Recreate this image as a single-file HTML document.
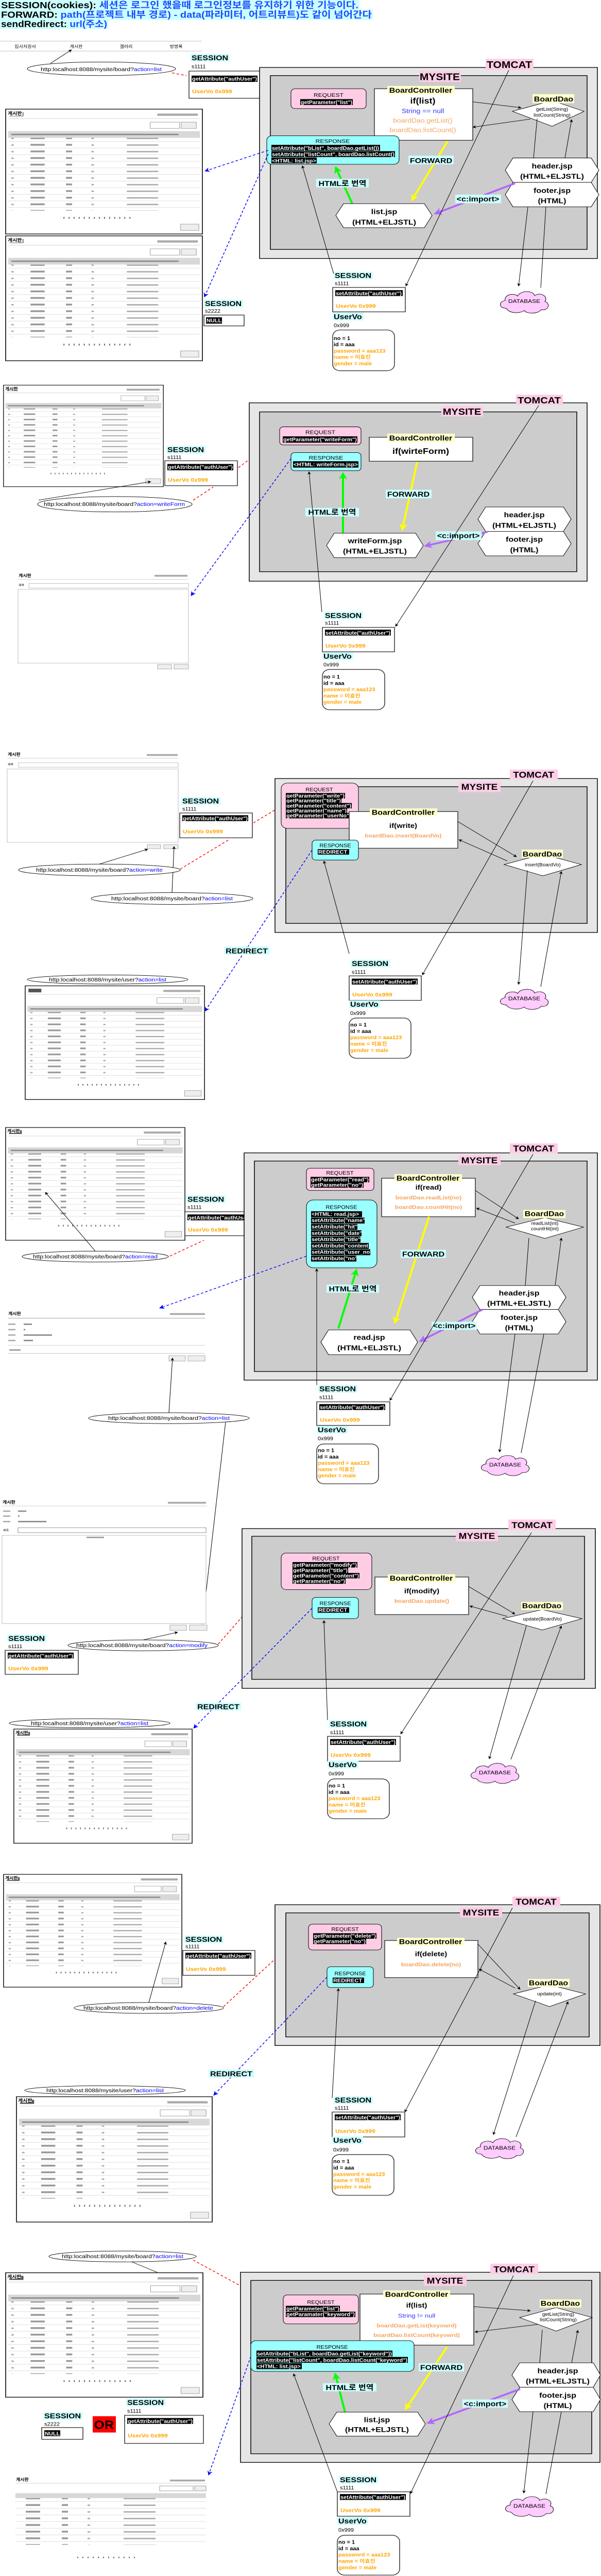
<!DOCTYPE html>
<html><head><meta charset="utf-8">
<meta name="viewport" content="width=1167">
<style>
html,body{margin:0;padding:0;background:#fff;width:100%;height:100%;overflow:hidden;}
svg{display:block;width:100vw;height:100vh;position:fixed;left:0;top:0}
text{font-family:"Liberation Sans","Noto Sans CJK KR",sans-serif;}
.lb{font-size:16px;font-weight:bold;fill:#000}
.sm{font-size:11px;fill:#000}
.wt{font-size:11px;fill:#fff;font-weight:bold}
.or{font-size:12px;fill:#ffa500;font-weight:bold}
.bx{fill:#fff;stroke:#333;stroke-width:1.5}
.tc{fill:#e6e6e6;stroke:#000;stroke-width:1.5}
.ms{fill:#cccccc;stroke:#000;stroke-width:1.5}
.rq{fill:#ffcce6;stroke:#000;stroke-width:1}
.rs{fill:#99ffff;stroke:#000;stroke-width:1}
.hx{fill:#fff;stroke:#000;stroke-width:1}
.hxt{font-size:16px;font-weight:bold;text-anchor:middle}
.ct{text-anchor:middle}
.thin{stroke:#000;stroke-width:1;fill:none}
.rd{stroke:#f00;stroke-width:1.5;stroke-dasharray:5 4;fill:none}
.bl{stroke:#00f;stroke-width:1.5;stroke-dasharray:5 4;fill:none}
.url{font-size:12px}
.uv{font-size:11px;font-weight:bold}
</style></head><body>
<svg viewBox="0 0 1167 5691" preserveAspectRatio="none" xmlns="http://www.w3.org/2000/svg">
<defs>
<marker id="ab" viewBox="0 0 10 10" refX="9" refY="5" markerWidth="7" markerHeight="7" orient="auto" markerUnits="userSpaceOnUse"><path d="M0,0L10,5L0,10L3,5z" fill="#000"/></marker>
<marker id="ar" viewBox="0 0 10 10" refX="9" refY="5" markerWidth="9" markerHeight="9" orient="auto" markerUnits="userSpaceOnUse"><path d="M0,0L10,5L0,10L3,5z" fill="#f00"/></marker>
<marker id="abl" viewBox="0 0 10 10" refX="9" refY="5" markerWidth="10" markerHeight="10" orient="auto" markerUnits="userSpaceOnUse"><path d="M0,0L10,5L0,10L3,5z" fill="#00f"/></marker>
<marker id="ay" viewBox="0 0 10 10" refX="8" refY="5" markerWidth="16" markerHeight="16" orient="auto" markerUnits="userSpaceOnUse"><path d="M0,0L10,5L0,10L3,5z" fill="#ff0"/></marker>
<marker id="ag" viewBox="0 0 10 10" refX="8" refY="5" markerWidth="16" markerHeight="16" orient="auto" markerUnits="userSpaceOnUse"><path d="M0,0L10,5L0,10L3,5z" fill="#0f0"/></marker>
<marker id="ap" viewBox="0 0 10 10" refX="8" refY="5" markerWidth="16" markerHeight="16" orient="auto" markerUnits="userSpaceOnUse"><path d="M0,0L10,5L0,10L3,5z" fill="#b266ff"/></marker>
<pattern id="rowp" patternUnits="userSpaceOnUse" width="390" height="14.7">
<rect width="390" height="14.7" fill="#fff"/>
<line x1="0" y1="14.2" x2="390" y2="14.2" stroke="#ccc" stroke-width="0.8"/>
<rect x="12" y="6" width="5" height="3" fill="#aaa"/><rect x="50" y="5" width="28" height="4" fill="#999"/>
<rect x="120" y="5" width="12" height="4" fill="#999"/><rect x="170" y="6" width="5" height="3" fill="#aaa"/>
<rect x="240" y="6" width="62" height="3" fill="#aaa"/>
</pattern>
<symbol id="brd" viewBox="0 0 390 280" preserveAspectRatio="none">
<rect x="1" y="1" width="388" height="278" fill="#fff" stroke="#333" stroke-width="2"/>
<rect x="8" y="8" width="28" height="9" fill="#555"/>
<rect x="300" y="11" width="80" height="5" fill="#aaa"/>
<line x1="6" y1="22" x2="384" y2="22" stroke="#ccc"/>
<rect x="286" y="30" width="58" height="14" fill="#fff" stroke="#999"/>
<rect x="347" y="30" width="30" height="14" fill="#eee" stroke="#999"/>
<rect x="6" y="50" width="378" height="15" fill="#d8d8d8"/>
<rect x="12" y="56" width="330" height="3" fill="#888"/>
<rect x="6" y="65" width="378" height="162" fill="url(#rowp)"/>
<line x1="115" y1="243" x2="250" y2="243" stroke="#666" stroke-width="4" stroke-dasharray="2 8"/>
<rect x="346" y="257" width="36" height="14" fill="#eee" stroke="#999"/>
</symbol>
<symbol id="cloud" viewBox="0 0 110 60" preserveAspectRatio="none">
<path d="M20,45 C5,45 5,30 18,28 C15,15 35,10 42,18 C48,5 72,5 75,17 C88,8 102,20 95,30 C108,35 100,52 88,48 C82,58 60,58 55,50 C45,58 25,56 20,45 Z" fill="#ffccff" stroke="#000" stroke-width="1"/>
</symbol>
</defs>

<!-- TITLE -->
<rect x="0" y="0" width="698" height="22" fill="#ccffff"/>
<rect x="0" y="22" width="724" height="22" fill="#ccffff"/>
<rect x="0" y="44" width="210" height="20" fill="#ccffff"/>
<text x="2" y="18" font-size="20" font-weight="bold" textLength="694" lengthAdjust="spacingAndGlyphs">SESSION(cookies): <tspan fill="#1a4dff">세션은 로그인 했을때 로그인정보를 유지하기 위한 기능이다.</tspan></text>
<text x="2" y="39" font-size="20" font-weight="bold" textLength="720" lengthAdjust="spacingAndGlyphs">FORWARD: <tspan fill="#1a4dff">path(프로젝트 내부 경로) - data(파라미터, 어트리뷰트)도 같이 넘어간다</tspan></text>
<text x="2" y="60" font-size="20" font-weight="bold" textLength="206" lengthAdjust="spacingAndGlyphs">sendRedirect: <tspan fill="#1a4dff">url(주소)</tspan></text>

<!-- SECTION 1 -->
<line x1="0" y1="91" x2="392" y2="91" stroke="#ddd" stroke-width="2"/>
<line x1="0" y1="113" x2="392" y2="113" stroke="#ddd" stroke-width="2"/>
<text x="49" y="106" font-size="9" class="ct">입사지원서</text>
<text x="148" y="106" font-size="9" class="ct">게시판</text>
<text x="245" y="106" font-size="9" class="ct">갤러리</text>
<text x="342" y="106" font-size="9" class="ct">방명록</text>
<line x1="98" y1="140" x2="139" y2="110" class="thin" marker-end="url(#ab)"/>
<ellipse cx="197" cy="152" rx="144" ry="15" fill="#fff" stroke="#000"/>
<text x="79" y="157" class="url" textLength="235" lengthAdjust="spacingAndGlyphs">http:localhost:8088/mysite/board?<tspan fill="#00f">action=list</tspan></text>
<line x1="334" y1="161" x2="362" y2="167" class="rd"/>
<rect x="370" y="119" width="76" height="17" fill="#ccffff"/><text x="372" y="133" class="lb">SESSION</text>
<text x="372" y="151" class="sm">s1111</text>
<rect x="367" y="157" width="152" height="60" class="bx"/>
<rect x="372" y="167" width="128" height="14" fill="#000"/><text x="373" y="178" class="wt" textLength="126" lengthAdjust="spacingAndGlyphs">getAttribute("authUser")</text>
<text x="373" y="206" class="or">UserVo 0x999</text>
<line x1="521" y1="207" x2="563" y2="221" class="rd" marker-end="url(#ar)"/>

<rect x="504" y="149" width="656" height="422" class="tc"/>
<rect x="525" y="167" width="615" height="384" class="ms"/>
<rect x="943" y="130" width="93" height="25" fill="#ffcce6"/><text x="989" y="150" class="ct" font-size="21" font-weight="bold">TOMCAT</text>
<rect x="814" y="157" width="81" height="24" fill="#ffcce6"/><text x="854" y="177" class="ct" font-size="21" font-weight="bold">MYSITE</text>
<rect x="565" y="196" width="146" height="44" rx="8" class="rq"/>
<text x="638" y="214" class="ct" font-size="12">REQUEST</text>
<rect x="583" y="219" width="102" height="13" fill="#000"/><text x="634" y="230" class="wt ct" textLength="100" lengthAdjust="spacingAndGlyphs">getParameter("list")</text>
<rect x="727" y="196" width="191" height="114" class="bx"/>
<rect x="752" y="190" width="131" height="19" fill="#ffffcc"/><text x="817" y="205" class="ct lb">BoardController</text>
<text x="821" y="229" class="ct" font-size="18" font-weight="bold">if(list)</text>
<text x="821" y="250" class="ct" font-size="14" fill="#3333ff">String == null</text>
<text x="821" y="271" class="ct" font-size="14" fill="#f4a460">boardDao.getList()</text>
<text x="821" y="292" class="ct" font-size="14" fill="#f4a460">boardDao.listCount()</text>
<polygon points="995,246 1072,222 1134,246 1072,279" class="hx"/>
<rect x="1034" y="208" width="81" height="20" fill="#ffffcc"/><text x="1075" y="224" class="ct lb">BoardDao</text>
<text x="1072" y="245" class="ct" font-size="10">getList(String)</text>
<text x="1072" y="258" class="ct" font-size="10">listCount(String)</text>
<line x1="918" y1="225" x2="1012" y2="238" class="thin" marker-end="url(#ab)"/>
<line x1="1030" y1="263" x2="918" y2="281" class="thin" marker-end="url(#ab)"/>
<rect x="518" y="300" width="257" height="63" rx="10" class="rs"/>
<text x="646" y="316" class="ct" font-size="12">RESPONSE</text>
<rect x="527" y="320" width="211" height="13" fill="#000"/><text x="528" y="331" class="wt" textLength="208" lengthAdjust="spacingAndGlyphs">setAttribute("bList", boardDao.getList())</text>
<rect x="527" y="334" width="240" height="13" fill="#000"/><text x="528" y="345" class="wt" textLength="238" lengthAdjust="spacingAndGlyphs">setAttribute("listCount", boardDao.listCount()</text>
<rect x="527" y="348" width="88" height="13" fill="#000"/><text x="528" y="359" class="wt" textLength="86" lengthAdjust="spacingAndGlyphs">&lt;HTML: list.jsp&gt;</text>
<line x1="869" y1="312" x2="800" y2="442" stroke="#ff0" stroke-width="4" marker-end="url(#ay)"/>
<rect x="793" y="344" width="88" height="19" fill="#ccffff"/><text x="837" y="360" class="ct lb">FORWARD</text>
<line x1="684" y1="450" x2="652" y2="370" stroke="#0f0" stroke-width="4" marker-end="url(#ag)"/>
<rect x="614" y="395" width="102" height="19" fill="#ccffff"/><text x="665" y="411" class="ct lb">HTML로 번역</text>
<polygon points="667,450 824,450 839,476 824,503 667,503 652,476" class="hx"/>
<text x="746" y="473" class="hxt" font-weight="normal">list.jsp</text><text x="746" y="496" class="hxt">(HTML+ELJSTL)</text>
<polygon points="996,349 1148,349 1163,376 1148,403 996,403 981,376" class="hx"/>
<polygon points="996,403 1148,403 1163,430 1148,457 996,457 981,430" class="hx"/>
<text x="1072" y="372" class="hxt">header.jsp</text><text x="1072" y="395" class="hxt">(HTML+ELJSTL)</text>
<text x="1072" y="426" class="hxt">footer.jsp</text><text x="1072" y="449" class="hxt">(HTML)</text>
<line x1="1000" y1="405" x2="845" y2="472" stroke="#b266ff" stroke-width="4" marker-end="url(#ap)"/>
<rect x="884" y="430" width="89" height="19" fill="#ccffff"/><text x="928" y="445" class="ct lb">&lt;c:import&gt;</text>
<line x1="988" y1="155" x2="788" y2="632" class="thin" marker-end="url(#ab)"/>
<line x1="648" y1="605" x2="587" y2="366" class="thin" marker-end="url(#ab)"/>
<line x1="1043" y1="262" x2="1036" y2="349" class="thin"/>
<line x1="1025" y1="457" x2="1007" y2="632" class="thin" marker-end="url(#ab)"/>
<line x1="1050" y1="636" x2="1060" y2="457" class="thin"/>
<line x1="1097" y1="349" x2="1110" y2="264" class="thin" marker-end="url(#ab)"/>
<use href="#brd" x="10" y="240" width="384" height="278"/>
<rect x="14" y="244" width="30" height="12" fill="#fff"/><text x="15" y="254" font-size="10" font-weight="bold">게시판</text>
<use href="#brd" x="10" y="520" width="384" height="278"/>
<rect x="14" y="524" width="30" height="12" fill="#fff"/><text x="15" y="534" font-size="10" font-weight="bold">게시판</text>
<line x1="521" y1="332" x2="398" y2="378" class="bl" marker-end="url(#abl)"/>
<line x1="521" y1="340" x2="397" y2="656" class="bl" marker-end="url(#abl)"/>
<rect x="396" y="662" width="76" height="17" fill="#ccffff"/><text x="398" y="676" class="lb">SESSION</text>
<text x="398" y="691" class="sm">s2222</text>
<rect x="396" y="696" width="78" height="24" class="bx"/>
<rect x="400" y="701" width="31" height="14" fill="#000"/><text x="401" y="712" class="wt">NULL</text>
<rect x="648" y="600" width="76" height="17" fill="#ccffff"/><text x="650" y="614" class="lb">SESSION</text>
<text x="650" y="630" class="sm">s1111</text>
<rect x="646" y="635" width="141" height="54" class="bx"/>
<rect x="651" y="641" width="131" height="13" fill="#000"/><text x="652" y="652" class="wt" textLength="128" lengthAdjust="spacingAndGlyphs">setAttribute("authUser")</text>
<text x="652" y="680" class="or">UserVo 0x999</text>
<rect x="646" y="690" width="60" height="18" fill="#ccffff"/><text x="648" y="705" class="lb">UserVo</text>
<text x="648" y="723" class="sm">0x999</text>
<rect x="646" y="729" width="120" height="90" rx="14" class="bx"/>
<text x="648" y="751" class="uv">no = 1</text><text x="648" y="765" class="uv">id = aaa</text>
<text x="648" y="779" class="uv" fill="#ffa500">password = aaa123</text><text x="648" y="793" class="uv" fill="#ffa500">name = 이효진</text><text x="648" y="807" class="uv" fill="#ffa500">gender = male</text>
<use href="#cloud" x="963" y="636" width="110" height="60"/><text x="1018" y="669" class="ct" font-size="12">DATABASE</text>

<!-- SECTION 2 -->
<use href="#brd" x="6" y="850" width="312" height="226"/>
<rect x="9" y="853" width="26" height="10" fill="#fff"/><text x="10" y="862" font-size="9" font-weight="bold">게시판</text>
<line x1="75" y1="1105" x2="293" y2="1064" class="thin" marker-end="url(#ab)"/>
<rect x="323" y="985" width="76" height="17" fill="#ccffff"/><text x="325" y="999" class="lb">SESSION</text>
<text x="325" y="1014" class="sm">s1111</text>
<rect x="320" y="1018" width="141" height="55" class="bx"/>
<rect x="325" y="1025" width="128" height="14" fill="#000"/><text x="326" y="1036" class="wt" textLength="126" lengthAdjust="spacingAndGlyphs">getAttribute("authUser")</text>
<text x="326" y="1064" class="or">UserVo 0x999</text>
<ellipse cx="223" cy="1114" rx="150" ry="17" fill="#fff" stroke="#000"/>
<text x="85" y="1118" class="url" textLength="274" lengthAdjust="spacingAndGlyphs">http:localhost:8088/mysite/board?<tspan fill="#00f">action=writeForm</tspan></text>
<line x1="375" y1="1105" x2="414" y2="1076" class="rd"/>
<line x1="463" y1="1033" x2="543" y2="965" class="rd" marker-end="url(#ar)"/>
<rect x="484" y="890" width="656" height="394" class="tc"/>
<rect x="504" y="910" width="616" height="353" class="ms"/>
<rect x="1002" y="872" width="91" height="23" fill="#ffcce6"/><text x="1047" y="891" class="ct" font-size="20" font-weight="bold">TOMCAT</text>
<rect x="857" y="897" width="81" height="23" fill="#ffcce6"/><text x="897" y="916" class="ct" font-size="20" font-weight="bold">MYSITE</text>
<rect x="543" y="943" width="158" height="40" rx="7" class="rq"/>
<text x="622" y="959" class="ct" font-size="12">REQUEST</text>
<rect x="549" y="964" width="145" height="14" fill="#000"/><text x="550" y="975" class="wt" textLength="143" lengthAdjust="spacingAndGlyphs">getParameter("writeForm")</text>
<rect x="565" y="1000" width="136" height="40" rx="7" class="rs"/>
<text x="633" y="1015" class="ct" font-size="12">RESPONSE</text>
<rect x="569" y="1019" width="127" height="14" fill="#000"/><text x="570" y="1030" class="wt" textLength="125" lengthAdjust="spacingAndGlyphs">&lt;HTML: writeForm.jsp&gt;</text>
<rect x="717" y="966" width="201" height="53" class="bx"/>
<rect x="752" y="958" width="131" height="19" fill="#ffffcc"/><text x="817" y="973" class="ct lb">BoardController</text>
<text x="817" y="1003" class="ct" font-size="18" font-weight="bold">if(wirteForm)</text>
<line x1="810" y1="1021" x2="781" y2="1170" stroke="#ff0" stroke-width="4" marker-end="url(#ay)"/>
<rect x="749" y="1082" width="89" height="19" fill="#ccffff"/><text x="793" y="1097" class="ct lb">FORWARD</text>
<line x1="666" y1="1177" x2="666" y2="1046" stroke="#0f0" stroke-width="4" marker-end="url(#ag)"/>
<rect x="593" y="1122" width="104" height="19" fill="#ccffff"/><text x="645" y="1137" class="ct lb">HTML로 번역</text>
<polygon points="649,1178 807,1178 822,1205 807,1232 649,1232 634,1205" class="hx"/>
<text x="728" y="1200" class="hxt" font-weight="normal">writeForm.jsp</text><text x="728" y="1223" class="hxt">(HTML+ELJSTL)</text>
<polygon points="943,1120 1094,1120 1109,1147 1094,1174 943,1174 928,1147" class="hx"/>
<polygon points="943,1174 1094,1174 1109,1201 1094,1228 943,1228 928,1201" class="hx"/>
<text x="1018" y="1143" class="hxt">header.jsp</text><text x="1018" y="1166" class="hxt">(HTML+ELJSTL)</text>
<text x="1018" y="1197" class="hxt">footer.jsp</text><text x="1018" y="1220" class="hxt">(HTML)</text>
<line x1="947" y1="1175" x2="826" y2="1206" stroke="#b266ff" stroke-width="4" marker-end="url(#ap)"/>
<rect x="846" y="1174" width="89" height="19" fill="#ccffff"/><text x="890" y="1189" class="ct lb">&lt;c:import&gt;</text>
<line x1="1046" y1="896" x2="768" y2="1384" class="thin" marker-end="url(#ab)"/>
<line x1="625" y1="1352" x2="600" y2="1042" class="thin" marker-end="url(#ab)"/>
<line x1="565" y1="1013" x2="371" y2="1316" class="bl" marker-end="url(#abl)"/>
<text x="36" y="1275" font-size="9" font-weight="bold">게시판</text>
<rect x="300" y="1270" width="64" height="4" fill="#aaa"/>
<line x1="35" y1="1280" x2="366" y2="1280" stroke="#ccc"/>
<text x="36" y="1295" font-size="6">제목</text>
<rect x="56" y="1289" width="310" height="10" fill="#fff" stroke="#bbb"/>
<rect x="35" y="1302" width="331" height="163" fill="#fff" stroke="#bbb"/>
<rect x="306" y="1468" width="27" height="10" fill="#eee" stroke="#aaa"/><rect x="338" y="1468" width="28" height="10" fill="#eee" stroke="#aaa"/>
<rect x="629" y="1351" width="76" height="17" fill="#ccffff"/><text x="631" y="1365" class="lb">SESSION</text>
<text x="631" y="1380" class="sm">s1111</text>
<rect x="626" y="1386" width="140" height="54" class="bx"/>
<rect x="631" y="1391" width="128" height="13" fill="#000"/><text x="632" y="1402" class="wt" textLength="126" lengthAdjust="spacingAndGlyphs">setAttribute("authUser")</text>
<text x="632" y="1431" class="or">UserVo 0x999</text>
<rect x="626" y="1441" width="60" height="17" fill="#ccffff"/><text x="628" y="1455" class="lb">UserVo</text>
<text x="628" y="1472" class="sm">0x999</text>
<rect x="626" y="1479" width="121" height="89" rx="14" class="bx"/>
<text x="628" y="1499" class="uv">no = 1</text><text x="628" y="1513" class="uv">id = aaa</text>
<text x="628" y="1527" class="uv" fill="#ffa500">password = aaa123</text><text x="628" y="1541" class="uv" fill="#ffa500">name = 이효진</text><text x="628" y="1555" class="uv" fill="#ffa500">gender = male</text>

<!-- SECTION 3 -->
<text x="15" y="1670" font-size="9" font-weight="bold">게시판</text>
<rect x="285" y="1666" width="60" height="4" fill="#aaa"/>
<line x1="14" y1="1675" x2="346" y2="1675" stroke="#ccc"/>
<text x="15" y="1691" font-size="6">제목</text>
<rect x="36" y="1685" width="310" height="10" fill="#fff" stroke="#bbb"/>
<rect x="14" y="1699" width="332" height="162" fill="#fff" stroke="#bbb"/>
<rect x="286" y="1866" width="26" height="9" fill="#eee" stroke="#aaa"/><rect x="318" y="1866" width="28" height="9" fill="#eee" stroke="#aaa"/>
<rect x="352" y="1761" width="76" height="17" fill="#ccffff"/><text x="354" y="1775" class="lb">SESSION</text>
<text x="354" y="1791" class="sm">s1111</text>
<rect x="349" y="1796" width="141" height="55" class="bx"/>
<rect x="354" y="1801" width="128" height="13" fill="#000"/><text x="355" y="1812" class="wt" textLength="126" lengthAdjust="spacingAndGlyphs">getAttribute("authUser")</text>
<text x="355" y="1841" class="or">UserVo 0x999</text>
<line x1="193" y1="1909" x2="287" y2="1876" class="thin" marker-end="url(#ab)"/>
<line x1="334" y1="1972" x2="338" y2="1870" class="thin" marker-end="url(#ab)"/>
<ellipse cx="193" cy="1922" rx="157" ry="13" fill="#fff" stroke="#000"/>
<text x="70" y="1926" class="url" textLength="246" lengthAdjust="spacingAndGlyphs">http:localhost:8088/mysite/board?<tspan fill="#00f">action=write</tspan></text>
<ellipse cx="334" cy="1985" rx="157" ry="13" fill="#fff" stroke="#000"/>
<text x="216" y="1989" class="url" textLength="236" lengthAdjust="spacingAndGlyphs">http:localhost:8088/mysite/board?<tspan fill="#00f">action=list</tspan></text>
<line x1="350" y1="1920" x2="443" y2="1856" class="rd"/>
<line x1="492" y1="1818" x2="545" y2="1782" class="rd" marker-end="url(#ar)"/>
<rect x="534" y="1720" width="626" height="340" class="tc"/>
<rect x="555" y="1738" width="585" height="302" class="ms"/>
<rect x="990" y="1700" width="93" height="22" fill="#ffcce6"/><text x="1036" y="1718" class="ct" font-size="19" font-weight="bold">TOMCAT</text>
<rect x="890" y="1727" width="82" height="23" fill="#ffcce6"/><text x="931" y="1745" class="ct" font-size="19" font-weight="bold">MYSITE</text>
<rect x="546" y="1730" width="150" height="100" rx="12" class="rq"/>
<text x="620" y="1748" class="ct" font-size="11">REQUEST</text>
<rect x="555" y="1752" width="115" height="12" fill="#000"/><text x="556" y="1762" class="wt" textLength="113" lengthAdjust="spacingAndGlyphs">getParameter("write")</text>
<rect x="555" y="1763" width="108" height="12" fill="#000"/><text x="556" y="1773" class="wt" textLength="106" lengthAdjust="spacingAndGlyphs">getParameter("title")</text>
<rect x="555" y="1774" width="128" height="12" fill="#000"/><text x="556" y="1784" class="wt" textLength="126" lengthAdjust="spacingAndGlyphs">getParameter("content")</text>
<rect x="555" y="1785" width="119" height="12" fill="#000"/><text x="556" y="1795" class="wt" textLength="117" lengthAdjust="spacingAndGlyphs">getParameter("name")</text>
<rect x="555" y="1796" width="128" height="12" fill="#000"/><text x="556" y="1806" class="wt" textLength="126" lengthAdjust="spacingAndGlyphs">getParameter("userNo")</text>
<rect x="678" y="1793" width="211" height="81" class="bx"/>
<rect x="718" y="1786" width="131" height="18" fill="#ffffcc"/><text x="783" y="1800" class="ct lb">BoardController</text>
<text x="783" y="1829" class="ct" font-size="15" font-weight="bold">if(write)</text>
<text x="783" y="1850" class="ct" font-size="12" font-weight="bold" fill="#f4a460">boardDao.insert(BoardVo)</text>
<rect x="606" y="1856" width="90" height="44" rx="7" class="rs"/>
<text x="651" y="1872" class="ct" font-size="11">RESPONSE</text>
<rect x="617" y="1876" width="61" height="12" fill="#000"/><text x="618" y="1886" class="wt">REDIRECT</text>
<polygon points="979,1910 1054,1887 1129,1910 1054,1935" class="hx"/>
<rect x="1013" y="1877" width="80" height="18" fill="#ffffcc"/><text x="1053" y="1892" class="ct lb">BoardDao</text>
<text x="1054" y="1914" class="ct" font-size="10">insert(BoardVo)</text>
<line x1="889" y1="1815" x2="1003" y2="1893" class="thin" marker-end="url(#ab)"/>
<line x1="985" y1="1902" x2="891" y2="1855" class="thin" marker-end="url(#ab)"/>
<line x1="606" y1="1878" x2="398" y2="2234" class="bl" marker-end="url(#abl)"/>
<rect x="435" y="2091" width="88" height="18" fill="#ccffff"/><text x="479" y="2106" class="ct lb">REDIRECT</text>
<line x1="678" y1="2107" x2="629" y2="1902" class="thin" marker-end="url(#ab)"/>
<line x1="1035" y1="1725" x2="820" y2="2154" class="thin" marker-end="url(#ab)"/>
<line x1="1024" y1="1923" x2="1007" y2="2175" class="thin" marker-end="url(#ab)"/>
<line x1="1050" y1="2180" x2="1090" y2="1925" class="thin" marker-end="url(#ab)"/>
<rect x="681" y="2120" width="76" height="17" fill="#ccffff"/><text x="683" y="2134" class="lb">SESSION</text>
<text x="683" y="2151" class="sm">s1111</text>
<rect x="678" y="2156" width="140" height="54" class="bx"/>
<rect x="683" y="2162" width="128" height="13" fill="#000"/><text x="684" y="2173" class="wt" textLength="126" lengthAdjust="spacingAndGlyphs">setAttribute("authUser")</text>
<text x="684" y="2201" class="or">UserVo 0x999</text>
<rect x="678" y="2210" width="60" height="17" fill="#ccffff"/><text x="680" y="2224" class="lb">UserVo</text>
<text x="680" y="2242" class="sm">0x999</text>
<rect x="678" y="2249" width="120" height="89" rx="14" class="bx"/>
<text x="680" y="2268" class="uv">no = 1</text><text x="680" y="2282" class="uv">id = aaa</text>
<text x="680" y="2296" class="uv" fill="#ffa500">password = aaa123</text><text x="680" y="2310" class="uv" fill="#ffa500">name = 이효진</text><text x="680" y="2324" class="uv" fill="#ffa500">gender = male</text>
<use href="#cloud" x="963" y="2178" width="110" height="56"/><text x="1018" y="2210" class="ct" font-size="12">DATABASE</text>
<ellipse cx="209" cy="2164" rx="156" ry="10" fill="#fff" stroke="#000"/>
<text x="95" y="2168" class="url" textLength="228" lengthAdjust="spacingAndGlyphs">http:localhost:8088/mysite/user?<tspan fill="#00f">action=list</tspan></text>
<use href="#brd" x="48" y="2177" width="350" height="253"/>

<!-- SECTION 4 -->
<use href="#brd" x="10" y="2490" width="350" height="251"/>
<rect x="13" y="2493" width="26" height="10" fill="#fff"/><text x="14" y="2502" font-size="9" font-weight="bold">게시판</text>
<rect x="362" y="2641" width="76" height="17" fill="#ccffff"/><text x="364" y="2655" class="lb">SESSION</text>
<text x="364" y="2671" class="sm">s1111</text>
<rect x="359" y="2677" width="141" height="53" class="bx"/>
<rect x="364" y="2683" width="128" height="13" fill="#000"/><text x="365" y="2694" class="wt" textLength="126" lengthAdjust="spacingAndGlyphs">getAttribute("authUser")</text>
<text x="365" y="2721" class="or">UserVo 0x999</text>
<line x1="185" y1="2764" x2="88" y2="2634" class="thin" marker-end="url(#ab)"/>
<ellipse cx="185" cy="2776" rx="142" ry="12" fill="#fff" stroke="#000"/>
<text x="64" y="2780" class="url" textLength="242" lengthAdjust="spacingAndGlyphs">http:localhost:8088/mysite/board?<tspan fill="#00f">action=read</tspan></text>
<line x1="330" y1="2775" x2="396" y2="2740" class="rd"/>
<line x1="500" y1="2668" x2="594" y2="2604" class="rd" marker-end="url(#ar)"/>
<rect x="474" y="2547" width="686" height="502" class="tc"/>
<rect x="494" y="2565" width="646" height="465" class="ms"/>
<rect x="990" y="2526" width="93" height="22" fill="#ffcce6"/><text x="1036" y="2544" class="ct" font-size="19" font-weight="bold">TOMCAT</text>
<rect x="890" y="2552" width="82" height="22" fill="#ffcce6"/><text x="931" y="2570" class="ct" font-size="19" font-weight="bold">MYSITE</text>
<rect x="595" y="2581" width="131" height="49" rx="7" class="rq"/>
<text x="660" y="2595" class="ct" font-size="11">REQUEST</text>
<rect x="603" y="2600" width="114" height="12" fill="#000"/><text x="604" y="2610" class="wt" textLength="112" lengthAdjust="spacingAndGlyphs">getParameter("read")</text>
<rect x="603" y="2612" width="103" height="12" fill="#000"/><text x="604" y="2622" class="wt" textLength="101" lengthAdjust="spacingAndGlyphs">getParameter("no")</text>
<rect x="741" y="2603" width="182" height="85" class="bx"/>
<rect x="766" y="2594" width="131" height="18" fill="#ffffcc"/><text x="831" y="2608" class="ct lb">BoardController</text>
<text x="832" y="2628" class="ct" font-size="15" font-weight="bold">if(read)</text>
<text x="832" y="2650" class="ct" font-size="12" font-weight="bold" fill="#f4a460">boardDao.readList(no)</text>
<text x="832" y="2671" class="ct" font-size="12" font-weight="bold" fill="#f4a460">boardDao.countHit(no)</text>
<polygon points="983,2711 1058,2690 1133,2711 1058,2736" class="hx"/>
<rect x="1016" y="2673" width="82" height="18" fill="#ffffcc"/><text x="1057" y="2687" class="ct lb">BoardDao</text>
<text x="1058" y="2706" class="ct" font-size="10">readList(int)</text><text x="1058" y="2718" class="ct" font-size="10">countHit(int)</text>
<line x1="923" y1="2630" x2="1007" y2="2693" class="thin" marker-end="url(#ab)"/>
<line x1="1000" y1="2702" x2="925" y2="2669" class="thin" marker-end="url(#ab)"/>
<rect x="595" y="2651" width="137" height="150" rx="14" class="rs"/>
<text x="663" y="2671" class="ct" font-size="11">RESPONSE</text>
<rect x="604" y="2676" width="99" height="13" fill="#000"/><text x="605" y="2686" class="wt">&lt;HTML: read.jsp&gt;</text>
<rect x="604" y="2690" width="104" height="13" fill="#000"/><text x="605" y="2700" class="wt">setAttribute("name"</text>
<rect x="604" y="2704" width="90" height="13" fill="#000"/><text x="605" y="2714" class="wt">setAttribute("hit"</text>
<rect x="604" y="2718" width="98" height="13" fill="#000"/><text x="605" y="2728" class="wt">setAttribute("date"</text>
<rect x="604" y="2732" width="96" height="13" fill="#000"/><text x="605" y="2742" class="wt">setAttribute("title"</text>
<rect x="604" y="2746" width="112" height="13" fill="#000"/><text x="605" y="2756" class="wt">setAttribute("content"</text>
<rect x="604" y="2760" width="115" height="13" fill="#000"/><text x="605" y="2770" class="wt">setAttribute("user_no"</text>
<rect x="604" y="2774" width="88" height="13" fill="#000"/><text x="605" y="2784" class="wt">setAttribute("no"</text>
<line x1="833" y1="2688" x2="767" y2="2922" stroke="#ff0" stroke-width="4" marker-end="url(#ay)"/>
<rect x="778" y="2761" width="88" height="18" fill="#ccffff"/><text x="822" y="2776" class="ct lb">FORWARD</text>
<line x1="657" y1="2935" x2="692" y2="2806" stroke="#0f0" stroke-width="4" marker-end="url(#ag)"/>
<rect x="634" y="2838" width="102" height="18" fill="#ccffff"/><text x="685" y="2853" class="ct lb">HTML로 번역</text>
<polygon points="638,2938 796,2938 811,2965 796,2993 638,2993 623,2965" class="hx"/>
<text x="717" y="2960" class="hxt" font-weight="normal">read.jsp</text><text x="717" y="2983" class="hxt">(HTML+ELJSTL)</text>
<polygon points="932,2840 1084,2840 1099,2866 1084,2893 932,2893 917,2866" class="hx"/>
<polygon points="932,2893 1084,2893 1099,2920 1084,2947 932,2947 917,2920" class="hx"/>
<text x="1008" y="2862" class="hxt">header.jsp</text><text x="1008" y="2885" class="hxt">(HTML+ELJSTL)</text>
<text x="1008" y="2916" class="hxt">footer.jsp</text><text x="1008" y="2939" class="hxt">(HTML)</text>
<line x1="937" y1="2893" x2="816" y2="2963" stroke="#b266ff" stroke-width="4" marker-end="url(#ap)"/>
<rect x="838" y="2920" width="88" height="18" fill="#ccffff"/><text x="882" y="2934" class="ct lb">&lt;c:import&gt;</text>
<line x1="595" y1="2775" x2="310" y2="2890" class="bl" marker-end="url(#abl)"/>
<line x1="615" y1="3060" x2="615" y2="2803" class="thin" marker-end="url(#ab)"/>
<line x1="1035" y1="2550" x2="757" y2="3094" class="thin" marker-end="url(#ab)"/>
<line x1="1027" y1="2735" x2="1020" y2="2840" class="thin"/>
<line x1="1078" y1="2840" x2="1090" y2="2735" class="thin" marker-end="url(#ab)"/>
<line x1="1000" y1="2947" x2="970" y2="3208" class="thin" marker-end="url(#ab)"/>
<line x1="1012" y1="3210" x2="1056" y2="2947" class="thin"/>
<text x="16" y="2905" font-size="9" font-weight="bold">게시판</text>
<rect x="330" y="2901" width="68" height="4" fill="#aaa"/>
<line x1="15" y1="2912" x2="398" y2="2912" stroke="#999"/>
<rect x="16" y="2924" width="14" height="3" fill="#aaa"/><rect x="46" y="2924" width="16" height="3" fill="#888"/>
<rect x="16" y="2936" width="14" height="3" fill="#aaa"/><rect x="46" y="2936" width="3" height="3" fill="#888"/>
<rect x="16" y="2948" width="14" height="3" fill="#aaa"/><rect x="46" y="2948" width="55" height="3" fill="#888"/>
<rect x="16" y="2960" width="14" height="3" fill="#aaa"/><rect x="46" y="2960" width="18" height="3" fill="#888"/>
<line x1="15" y1="2972" x2="398" y2="2972" stroke="#ccc"/>
<rect x="18" y="2981" width="22" height="3" fill="#999"/>
<line x1="15" y1="2990" x2="398" y2="2990" stroke="#ddd" stroke-width="2"/>
<rect x="328" y="2995" width="32" height="12" fill="#eee" stroke="#aaa"/><rect x="365" y="2995" width="33" height="12" fill="#eee" stroke="#aaa"/>
<rect x="618" y="3060" width="76" height="17" fill="#ccffff"/><text x="620" y="3074" class="lb">SESSION</text>
<text x="620" y="3091" class="sm">s1111</text>
<rect x="615" y="3097" width="142" height="52" class="bx"/>
<rect x="620" y="3102" width="128" height="13" fill="#000"/><text x="621" y="3113" class="wt" textLength="126" lengthAdjust="spacingAndGlyphs">setAttribute("authUser")</text>
<text x="621" y="3141" class="or">UserVo 0x999</text>
<rect x="615" y="3150" width="60" height="17" fill="#ccffff"/><text x="617" y="3164" class="lb">UserVo</text>
<text x="617" y="3182" class="sm">0x999</text>
<rect x="615" y="3190" width="120" height="88" rx="14" class="bx"/>
<text x="617" y="3208" class="uv">no = 1</text><text x="617" y="3222" class="uv">id = aaa</text>
<text x="617" y="3236" class="uv" fill="#ffa500">password = aaa123</text><text x="617" y="3250" class="uv" fill="#ffa500">name = 이효진</text><text x="617" y="3264" class="uv" fill="#ffa500">gender = male</text>
<use href="#cloud" x="926" y="3208" width="110" height="56"/><text x="981" y="3240" class="ct" font-size="12">DATABASE</text>
<line x1="328" y1="3121" x2="335" y2="3000" class="thin" marker-end="url(#ab)"/>
<line x1="438" y1="3142" x2="393" y2="3588" class="thin" marker-end="url(#ab)"/>
<ellipse cx="328" cy="3133" rx="156" ry="12" fill="#fff" stroke="#000"/>
<text x="210" y="3137" class="url" textLength="236" lengthAdjust="spacingAndGlyphs">http:localhost:8088/mysite/board?<tspan fill="#00f">action=list</tspan></text>

<!-- SECTION 5 -->
<text x="5" y="3322" font-size="9" font-weight="bold">게시판</text>
<rect x="326" y="3318" width="74" height="4" fill="#aaa"/>
<line x1="4" y1="3327" x2="402" y2="3327" stroke="#ccc"/>
<rect x="6" y="3337" width="14" height="3" fill="#aaa"/><rect x="35" y="3337" width="16" height="3" fill="#888"/>
<rect x="6" y="3348" width="14" height="3" fill="#aaa"/><rect x="35" y="3348" width="3" height="3" fill="#888"/>
<rect x="6" y="3360" width="14" height="3" fill="#aaa"/><rect x="35" y="3360" width="55" height="3" fill="#888"/>
<text x="6" y="3383" font-size="6">제목</text>
<rect x="35" y="3375" width="365" height="11" fill="#fff" stroke="#888"/>
<rect x="4" y="3392" width="396" height="195" fill="#fff" stroke="#bbb"/>
<rect x="168" y="3395" width="34" height="3" fill="#999"/>
<rect x="330" y="3590" width="32" height="12" fill="#eee" stroke="#aaa"/><rect x="368" y="3590" width="34" height="12" fill="#eee" stroke="#aaa"/>
<rect x="14" y="3611" width="76" height="17" fill="#ccffff"/><text x="16" y="3625" class="lb">SESSION</text>
<text x="16" y="3641" class="sm">s1111</text>
<rect x="10" y="3646" width="142" height="53" class="bx"/>
<rect x="15" y="3651" width="128" height="13" fill="#000"/><text x="16" y="3662" class="wt" textLength="126" lengthAdjust="spacingAndGlyphs">getAttribute("authUser")</text>
<text x="16" y="3690" class="or">UserVo 0x999</text>
<line x1="278" y1="3623" x2="345" y2="3606" class="thin" marker-end="url(#ab)"/>
<ellipse cx="278" cy="3635" rx="146" ry="12" fill="#fff" stroke="#000"/>
<text x="148" y="3639" class="url" textLength="255" lengthAdjust="spacingAndGlyphs">http:localhost:8088/mysite/board?<tspan fill="#00f">action=modify</tspan></text>
<line x1="424" y1="3632" x2="544" y2="3476" class="rd" marker-end="url(#ar)"/>
<rect x="470" y="3377" width="686" height="353" class="tc"/>
<rect x="489" y="3394" width="646" height="316" class="ms"/>
<rect x="987" y="3357" width="92" height="23" fill="#ffcce6"/><text x="1033" y="3376" class="ct" font-size="19" font-weight="bold">TOMCAT</text>
<rect x="885" y="3381" width="82" height="24" fill="#ffcce6"/><text x="926" y="3400" class="ct" font-size="19" font-weight="bold">MYSITE</text>
<rect x="546" y="3431" width="176" height="81" rx="10" class="rq"/>
<text x="633" y="3447" class="ct" font-size="11">REQUEST</text>
<rect x="568" y="3451" width="126" height="12" fill="#000"/><text x="569" y="3461" class="wt" textLength="124" lengthAdjust="spacingAndGlyphs">getParameter("modify")</text>
<rect x="568" y="3463" width="108" height="12" fill="#000"/><text x="569" y="3473" class="wt" textLength="106" lengthAdjust="spacingAndGlyphs">getParameter("title")</text>
<rect x="568" y="3475" width="130" height="12" fill="#000"/><text x="569" y="3485" class="wt" textLength="128" lengthAdjust="spacingAndGlyphs">getParameter("content")</text>
<rect x="568" y="3487" width="103" height="12" fill="#000"/><text x="569" y="3497" class="wt" textLength="101" lengthAdjust="spacingAndGlyphs">getParameter("no")</text>
<rect x="728" y="3484" width="182" height="83" class="bx"/>
<rect x="753" y="3478" width="131" height="18" fill="#ffffcc"/><text x="818" y="3492" class="ct lb">BoardController</text>
<text x="819" y="3520" class="ct" font-size="15" font-weight="bold">if(modify)</text>
<text x="819" y="3541" class="ct" font-size="12" font-weight="bold" fill="#f4a460">boardDao.update()</text>
<rect x="606" y="3529" width="90" height="47" rx="7" class="rs"/>
<text x="651" y="3546" class="ct" font-size="11">RESPONSE</text>
<rect x="617" y="3551" width="61" height="12" fill="#000"/><text x="618" y="3561" class="wt">REDIRECT</text>
<polygon points="976,3576 1053,3556 1130,3576 1053,3601" class="hx"/>
<rect x="1012" y="3539" width="81" height="18" fill="#ffffcc"/><text x="1052" y="3553" class="ct lb">BoardDao</text>
<text x="1053" y="3580" class="ct" font-size="10">update(BoardVo)</text>
<line x1="910" y1="3505" x2="1000" y2="3566" class="thin" marker-end="url(#ab)"/>
<line x1="985" y1="3571" x2="912" y2="3548" class="thin" marker-end="url(#ab)"/>
<line x1="606" y1="3553" x2="376" y2="3818" class="bl" marker-end="url(#abl)"/>
<rect x="380" y="3761" width="88" height="18" fill="#ccffff"/><text x="424" y="3776" class="ct lb">REDIRECT</text>
<line x1="636" y1="3800" x2="629" y2="3580" class="thin" marker-end="url(#ab)"/>
<line x1="1032" y1="3386" x2="778" y2="3831" class="thin" marker-end="url(#ab)"/>
<line x1="1022" y1="3592" x2="950" y2="3886" class="thin" marker-end="url(#ab)"/>
<line x1="992" y1="3887" x2="1090" y2="3592" class="thin" marker-end="url(#ab)"/>
<rect x="639" y="3800" width="76" height="17" fill="#ccffff"/><text x="641" y="3814" class="lb">SESSION</text>
<text x="641" y="3831" class="sm">s1111</text>
<rect x="636" y="3836" width="141" height="55" class="bx"/>
<rect x="641" y="3842" width="128" height="13" fill="#000"/><text x="642" y="3853" class="wt" textLength="126" lengthAdjust="spacingAndGlyphs">setAttribute("authUser")</text>
<text x="642" y="3881" class="or">UserVo 0x999</text>
<rect x="636" y="3890" width="60" height="17" fill="#ccffff"/><text x="638" y="3904" class="lb">UserVo</text>
<text x="638" y="3922" class="sm">0x999</text>
<rect x="636" y="3930" width="120" height="88" rx="14" class="bx"/>
<text x="638" y="3949" class="uv">no = 1</text><text x="638" y="3963" class="uv">id = aaa</text>
<text x="638" y="3977" class="uv" fill="#ffa500">password = aaa123</text><text x="638" y="3991" class="uv" fill="#ffa500">name = 이효진</text><text x="638" y="4005" class="uv" fill="#ffa500">gender = male</text>
<use href="#cloud" x="906" y="3888" width="110" height="56"/><text x="961" y="3920" class="ct" font-size="12">DATABASE</text>
<ellipse cx="174" cy="3807" rx="156" ry="10" fill="#fff" stroke="#000"/>
<text x="60" y="3811" class="url" textLength="228" lengthAdjust="spacingAndGlyphs">http:localhost:8088/mysite/user?<tspan fill="#00f">action=list</tspan></text>
<use href="#brd" x="26" y="3819" width="348" height="254"/>
<rect x="29" y="3822" width="26" height="10" fill="#fff"/><text x="30" y="3831" font-size="9" font-weight="bold">게시판</text>

<!-- SECTION 6 -->
<use href="#brd" x="6" y="4140" width="348" height="251"/>
<rect x="9" y="4143" width="26" height="10" fill="#fff"/><text x="10" y="4152" font-size="9" font-weight="bold">게시판</text>
<rect x="358" y="4276" width="76" height="17" fill="#ccffff"/><text x="360" y="4290" class="lb">SESSION</text>
<text x="360" y="4304" class="sm">s1111</text>
<rect x="355" y="4309" width="140" height="55" class="bx"/>
<rect x="360" y="4314" width="128" height="13" fill="#000"/><text x="361" y="4325" class="wt" textLength="126" lengthAdjust="spacingAndGlyphs">getAttribute("authUser")</text>
<text x="361" y="4354" class="or">UserVo 0x999</text>
<line x1="289" y1="4424" x2="322" y2="4290" class="thin" marker-end="url(#ab)"/>
<ellipse cx="289" cy="4436" rx="145" ry="12" fill="#fff" stroke="#000"/>
<text x="162" y="4440" class="url" textLength="252" lengthAdjust="spacingAndGlyphs">http:localhost:8088/mysite/board?<tspan fill="#00f">action=delete</tspan></text>
<line x1="434" y1="4433" x2="597" y2="4262" class="rd" marker-end="url(#ar)"/>
<rect x="534" y="4208" width="631" height="311" class="tc"/>
<rect x="555" y="4226" width="589" height="274" class="ms"/>
<rect x="995" y="4190" width="93" height="22" fill="#ffcce6"/><text x="1041" y="4208" class="ct" font-size="19" font-weight="bold">TOMCAT</text>
<rect x="893" y="4214" width="82" height="22" fill="#ffcce6"/><text x="934" y="4232" class="ct" font-size="19" font-weight="bold">MYSITE</text>
<rect x="599" y="4251" width="142" height="57" rx="8" class="rq"/>
<text x="670" y="4266" class="ct" font-size="11">REQUEST</text>
<rect x="608" y="4271" width="123" height="12" fill="#000"/><text x="609" y="4281" class="wt" textLength="121" lengthAdjust="spacingAndGlyphs">getParameter("delete")</text>
<rect x="608" y="4283" width="103" height="12" fill="#000"/><text x="609" y="4293" class="wt" textLength="101" lengthAdjust="spacingAndGlyphs">getParameter("no")</text>
<rect x="747" y="4287" width="181" height="82" class="bx"/>
<rect x="771" y="4281" width="131" height="18" fill="#ffffcc"/><text x="836" y="4295" class="ct lb">BoardController</text>
<text x="837" y="4322" class="ct" font-size="15" font-weight="bold">if(delete)</text>
<text x="837" y="4344" class="ct" font-size="12" font-weight="bold" fill="#f4a460">boardDao.delete(no)</text>
<rect x="635" y="4345" width="90" height="46" rx="7" class="rs"/>
<text x="680" y="4364" class="ct" font-size="11">RESPONSE</text>
<rect x="646" y="4369" width="61" height="12" fill="#000"/><text x="647" y="4379" class="wt">REDIRECT</text>
<polygon points="997,4405 1067,4385 1137,4405 1067,4433" class="hx"/>
<rect x="1025" y="4372" width="81" height="18" fill="#ffffcc"/><text x="1065" y="4386" class="ct lb">BoardDao</text>
<text x="1067" y="4408" class="ct" font-size="10">update(int)</text>
<line x1="928" y1="4295" x2="1010" y2="4395" class="thin" marker-end="url(#ab)"/>
<line x1="1000" y1="4392" x2="930" y2="4350" class="thin" marker-end="url(#ab)"/>
<line x1="635" y1="4368" x2="415" y2="4629" class="bl" marker-end="url(#abl)"/>
<rect x="405" y="4572" width="88" height="18" fill="#ccffff"/><text x="449" y="4587" class="ct lb">REDIRECT</text>
<line x1="645" y1="4635" x2="657" y2="4393" class="thin" marker-end="url(#ab)"/>
<line x1="995" y1="4215" x2="786" y2="4666" class="thin" marker-end="url(#ab)"/>
<line x1="1040" y1="4420" x2="958" y2="4716" class="thin" marker-end="url(#ab)"/>
<line x1="1002" y1="4721" x2="1103" y2="4422" class="thin" marker-end="url(#ab)"/>
<rect x="648" y="4631" width="76" height="17" fill="#ccffff"/><text x="650" y="4645" class="lb">SESSION</text>
<text x="650" y="4661" class="sm">s1111</text>
<rect x="645" y="4666" width="141" height="55" class="bx"/>
<rect x="650" y="4671" width="128" height="13" fill="#000"/><text x="651" y="4682" class="wt" textLength="126" lengthAdjust="spacingAndGlyphs">setAttribute("authUser")</text>
<text x="651" y="4712" class="or">UserVo 0x999</text>
<rect x="645" y="4720" width="60" height="17" fill="#ccffff"/><text x="647" y="4734" class="lb">UserVo</text>
<text x="647" y="4753" class="sm">0x999</text>
<rect x="645" y="4760" width="120" height="90" rx="14" class="bx"/>
<text x="647" y="4779" class="uv">no = 1</text><text x="647" y="4793" class="uv">id = aaa</text>
<text x="647" y="4807" class="uv" fill="#ffa500">password = aaa123</text><text x="647" y="4821" class="uv" fill="#ffa500">name = 이효진</text><text x="647" y="4835" class="uv" fill="#ffa500">gender = male</text>
<use href="#cloud" x="915" y="4717" width="110" height="56"/><text x="970" y="4749" class="ct" font-size="12">DATABASE</text>
<ellipse cx="204" cy="4618" rx="156" ry="10" fill="#fff" stroke="#000"/>
<text x="90" y="4622" class="url" textLength="228" lengthAdjust="spacingAndGlyphs">http:localhost:8088/mysite/user?<tspan fill="#00f">action=list</tspan></text>
<use href="#brd" x="31" y="4631" width="382" height="279"/>
<rect x="34" y="4634" width="28" height="11" fill="#fff"/><text x="35" y="4644" font-size="10" font-weight="bold">게시판</text>

<!-- SECTION 7 -->
<line x1="245" y1="4992" x2="378" y2="5054" class="thin" marker-end="url(#ab)"/>
<ellipse cx="238" cy="4985" rx="143" ry="12" fill="#fff" stroke="#000"/>
<text x="120" y="4989" class="url" textLength="236" lengthAdjust="spacingAndGlyphs">http:localhost:8088/mysite/board?<tspan fill="#00f">action=list</tspan></text>
<line x1="375" y1="4993" x2="548" y2="5100" class="rd" marker-end="url(#ar)"/>
<use href="#brd" x="10" y="5020" width="385" height="277"/>
<rect x="13" y="5023" width="28" height="11" fill="#fff"/><text x="14" y="5033" font-size="10" font-weight="bold">게시판</text>
<rect x="245" y="5299" width="76" height="17" fill="#ccffff"/><text x="247" y="5313" class="lb">SESSION</text>
<text x="247" y="5330" class="sm">s1111</text>
<rect x="242" y="5336" width="153" height="62" class="bx"/>
<rect x="247" y="5342" width="128" height="13" fill="#000"/><text x="248" y="5353" class="wt" textLength="126" lengthAdjust="spacingAndGlyphs">getAttribute("authUser")</text>
<text x="248" y="5385" class="or">UserVo 0x999</text>
<rect x="84" y="5329" width="76" height="17" fill="#ccffff"/><text x="86" y="5343" class="lb">SESSION</text>
<text x="86" y="5359" class="sm">s2222</text>
<rect x="81" y="5363" width="80" height="26" class="bx"/>
<rect x="86" y="5369" width="31" height="13" fill="#000"/><text x="87" y="5380" class="wt">NULL</text>
<rect x="180" y="5338" width="45" height="36" fill="#ff0000"/><text x="202" y="5366" class="ct" font-size="26" font-weight="bold">OR</text>
<rect x="467" y="5020" width="698" height="420" class="tc"/>
<rect x="487" y="5038" width="662" height="383" class="ms"/>
<rect x="952" y="5001" width="93" height="23" fill="#ffcce6"/><text x="998" y="5020" class="ct" font-size="19" font-weight="bold">TOMCAT</text>
<rect x="823" y="5026" width="83" height="24" fill="#ffcce6"/><text x="864" y="5045" class="ct" font-size="19" font-weight="bold">MYSITE</text>
<rect x="550" y="5070" width="146" height="64" rx="8" class="rq"/>
<text x="623" y="5090" class="ct" font-size="11">REQUEST</text>
<rect x="555" y="5094" width="105" height="12" fill="#000"/><text x="556" y="5104" class="wt" textLength="103" lengthAdjust="spacingAndGlyphs">getParameter("list")</text>
<rect x="555" y="5107" width="135" height="12" fill="#000"/><text x="556" y="5117" class="wt" textLength="133" lengthAdjust="spacingAndGlyphs">getParamater("keyword")</text>
<rect x="699" y="5068" width="221" height="113" class="bx"/>
<rect x="744" y="5060" width="130" height="18" fill="#ffffcc"/><text x="809" y="5074" class="ct lb">BoardController</text>
<text x="809" y="5098" class="ct" font-size="15" font-weight="bold">if(list)</text>
<text x="809" y="5120" class="ct" font-size="13" fill="#3333ff">String != null</text>
<text x="809" y="5142" class="ct" font-size="12" font-weight="bold" fill="#f4a460">boardDao.getList(keyowrd)</text>
<text x="809" y="5163" class="ct" font-size="12" font-weight="bold" fill="#f4a460">boardDao.listCount(keyowrd)</text>
<polygon points="1009,5120 1080,5098 1150,5120 1080,5150" class="hx"/>
<rect x="1048" y="5080" width="81" height="18" fill="#ffffcc"/><text x="1088" y="5094" class="ct lb">BoardDao</text>
<text x="1084" y="5116" class="ct" font-size="10">getList(String)</text><text x="1084" y="5128" class="ct" font-size="10">listCount(String)</text>
<line x1="920" y1="5096" x2="1030" y2="5105" class="thin" marker-end="url(#ab)"/>
<line x1="1045" y1="5135" x2="922" y2="5152" class="thin" marker-end="url(#ab)"/>
<rect x="487" y="5171" width="317" height="68" rx="10" class="rs"/>
<text x="645" y="5189" class="ct" font-size="11">RESPONSE</text>
<rect x="498" y="5193" width="264" height="13" fill="#000"/><text x="499" y="5204" class="wt" textLength="262" lengthAdjust="spacingAndGlyphs">setAttribute("bList", boardDao.getList("keyword"))</text>
<rect x="498" y="5207" width="294" height="13" fill="#000"/><text x="499" y="5218" class="wt" textLength="292" lengthAdjust="spacingAndGlyphs">setAttribute("listCount", boardDao.listCount("keyword")</text>
<rect x="498" y="5221" width="88" height="13" fill="#000"/><text x="499" y="5232" class="wt">&lt;HTML: list.jsp&gt;</text>
<line x1="868" y1="5185" x2="788" y2="5322" stroke="#ff0" stroke-width="4" marker-end="url(#ay)"/>
<rect x="813" y="5221" width="88" height="18" fill="#ccffff"/><text x="857" y="5236" class="ct lb">FORWARD</text>
<line x1="670" y1="5329" x2="651" y2="5245" stroke="#0f0" stroke-width="4" marker-end="url(#ag)"/>
<rect x="627" y="5265" width="104" height="18" fill="#ccffff"/><text x="679" y="5280" class="ct lb">HTML로 번역</text>
<polygon points="654,5329 811,5329 826,5355 811,5382 654,5382 639,5355" class="hx"/>
<text x="732" y="5351" class="hxt" font-weight="normal">list.jsp</text><text x="732" y="5373" class="hxt">(HTML+ELJSTL)</text>
<polygon points="1009,5220 1152,5220 1166,5247 1152,5274 1009,5274 994,5247" class="hx"/>
<polygon points="1009,5274 1152,5274 1166,5301 1152,5328 1009,5328 994,5301" class="hx"/>
<text x="1083" y="5243" class="hxt">header.jsp</text><text x="1083" y="5266" class="hxt">(HTML+ELJSTL)</text>
<text x="1083" y="5297" class="hxt">footer.jsp</text><text x="1083" y="5320" class="hxt">(HTML)</text>
<line x1="1010" y1="5278" x2="831" y2="5353" stroke="#b266ff" stroke-width="4" marker-end="url(#ap)"/>
<rect x="898" y="5301" width="88" height="18" fill="#ccffff"/><text x="942" y="5316" class="ct lb">&lt;c:import&gt;</text>
<line x1="487" y1="5206" x2="405" y2="5468" class="bl" marker-end="url(#abl)"/>
<line x1="655" y1="5505" x2="570" y2="5244" class="thin" marker-end="url(#ab)"/>
<line x1="997" y1="5027" x2="797" y2="5509" class="thin" marker-end="url(#ab)"/>
<line x1="1053" y1="5147" x2="1048" y2="5220" class="thin"/>
<line x1="1110" y1="5220" x2="1122" y2="5148" class="thin" marker-end="url(#ab)"/>
<line x1="1035" y1="5328" x2="1017" y2="5508" class="thin" marker-end="url(#ab)"/>
<line x1="1060" y1="5510" x2="1090" y2="5328" class="thin"/>
<rect x="658" y="5470" width="76" height="17" fill="#ccffff"/><text x="660" y="5484" class="lb">SESSION</text>
<text x="660" y="5500" class="sm">s1111</text>
<rect x="655" y="5505" width="141" height="54" class="bx"/>
<rect x="660" y="5510" width="128" height="13" fill="#000"/><text x="661" y="5521" class="wt" textLength="126" lengthAdjust="spacingAndGlyphs">setAttribute("authUser")</text>
<text x="661" y="5550" class="or">UserVo 0x999</text>
<rect x="655" y="5561" width="60" height="17" fill="#ccffff"/><text x="657" y="5575" class="lb">UserVo</text>
<text x="657" y="5593" class="sm">0x999</text>
<rect x="655" y="5601" width="121" height="88" rx="14" class="bx"/>
<text x="657" y="5620" class="uv">no = 1</text><text x="657" y="5634" class="uv">id = aaa</text>
<text x="657" y="5648" class="uv" fill="#ffa500">password = aaa123</text><text x="657" y="5662" class="uv" fill="#ffa500">name = 이효진</text><text x="657" y="5676" class="uv" fill="#ffa500">gender = male</text>
<use href="#cloud" x="973" y="5508" width="110" height="56"/><text x="1028" y="5540" class="ct" font-size="12">DATABASE</text>
<text x="31" y="5481" font-size="9" font-weight="bold">게시판</text>
<rect x="330" y="5478" width="68" height="4" fill="#aaa"/>
<line x1="30" y1="5486" x2="400" y2="5486" stroke="#ccc"/>
<rect x="310" y="5492" width="65" height="11" fill="#fff" stroke="#999"/><rect x="378" y="5492" width="22" height="11" fill="#eee" stroke="#999"/>
<rect x="30" y="5508" width="370" height="11" fill="#d8d8d8"/>
<rect x="30" y="5519" width="370" height="103" fill="url(#rowp)"/>
<line x1="150" y1="5650" x2="265" y2="5650" stroke="#666" stroke-width="3" stroke-dasharray="2 8"/>
</svg>
</body></html>
